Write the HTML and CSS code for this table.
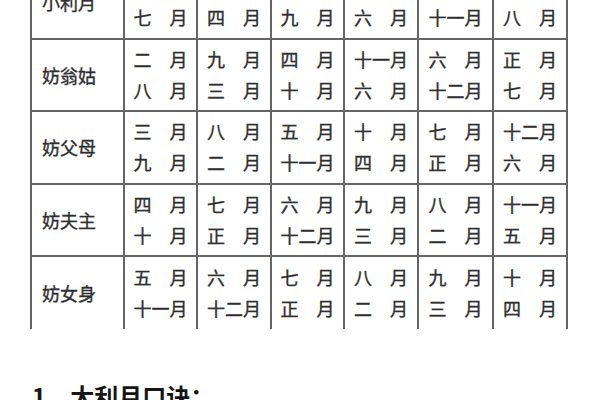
FILE: index.html
```html
<!DOCTYPE html>
<html lang="zh">
<head>
<meta charset="utf-8">
<link rel="stylesheet" href="styles.css">
</head>
<body>
<div class="page">
<table class="months">
<colgroup>
<col class="c0"><col class="c1"><col class="c2"><col class="c3"><col class="c4"><col class="c5"><col class="c6">
</colgroup>
<tbody>
<tr>
<th>小利月</th>
<td><div>正　月</div><div>七　月</div></td>
<td><div>十　月</div><div>四　月</div></td>
<td><div>三　月</div><div>九　月</div></td>
<td><div>十二月</div><div>六　月</div></td>
<td><div>五　月</div><div>十一月</div></td>
<td><div>二　月</div><div>八　月</div></td>
</tr>
<tr>
<th>妨翁姑</th>
<td><div>二　月</div><div>八　月</div></td>
<td><div>九　月</div><div>三　月</div></td>
<td><div>四　月</div><div>十　月</div></td>
<td><div>十一月</div><div>六　月</div></td>
<td><div>六　月</div><div>十二月</div></td>
<td><div>正　月</div><div>七　月</div></td>
</tr>
<tr>
<th>妨父母</th>
<td><div>三　月</div><div>九　月</div></td>
<td><div>八　月</div><div>二　月</div></td>
<td><div>五　月</div><div>十一月</div></td>
<td><div>十　月</div><div>四　月</div></td>
<td><div>七　月</div><div>正　月</div></td>
<td><div>十二月</div><div>六　月</div></td>
</tr>
<tr>
<th>妨夫主</th>
<td><div>四　月</div><div>十　月</div></td>
<td><div>七　月</div><div>正　月</div></td>
<td><div>六　月</div><div>十二月</div></td>
<td><div>九　月</div><div>三　月</div></td>
<td><div>八　月</div><div>二　月</div></td>
<td><div>十一月</div><div>五　月</div></td>
</tr>
<tr>
<th>妨女身</th>
<td><div>五　月</div><div>十一月</div></td>
<td><div>六　月</div><div>十二月</div></td>
<td><div>七　月</div><div>正　月</div></td>
<td><div>八　月</div><div>二　月</div></td>
<td><div>九　月</div><div>三　月</div></td>
<td><div>十　月</div><div>四　月</div></td>
</tr>
</tbody>
</table>
<h2 class="heading">1、大利月口诀：</h2>
</div>
</body>
</html>
```

FILE: styles.css
```css
html, body {
  margin: 0;
  padding: 0;
  background: #ffffff;
}

body {
  width: 600px;
  height: 400px;
  overflow: hidden;
  font-family: "Noto Sans CJK SC", "Noto Sans", sans-serif;
  color: #2e2e2e;
}

.page {
  padding-left: 30px;
}

.months {
  border-collapse: collapse;
  table-layout: fixed;
  width: 538px;
  margin-top: -35px;
}

.c0 { width: 93px; }
.c1 { width: 73px; }
.c2 { width: 74px; }
.c3 { width: 73px; }
.c4 { width: 74px; }
.c5 { width: 75px; }
.c6 { width: 74px; }

.months tr {
  height: 72.5px;
}

.months th,
.months td {
  border: 2px solid #666666;
  padding: 0;
  font-size: 18px;
  font-weight: normal;
  vertical-align: middle;
  -webkit-text-stroke: 0.35px #2e2e2e;
}

.months tr:last-child th,
.months tr:last-child td {
  border-bottom: none;
}

.months th {
  text-align: left;
  padding-left: 10px;
  line-height: 24px;
}

.months td {
  text-align: center;
  line-height: 31px;
}

.heading {
  margin: 51px 0 0 2px;
  font-size: 24px;
  line-height: 32px;
  font-weight: bold;
  color: #151515;
}
```
